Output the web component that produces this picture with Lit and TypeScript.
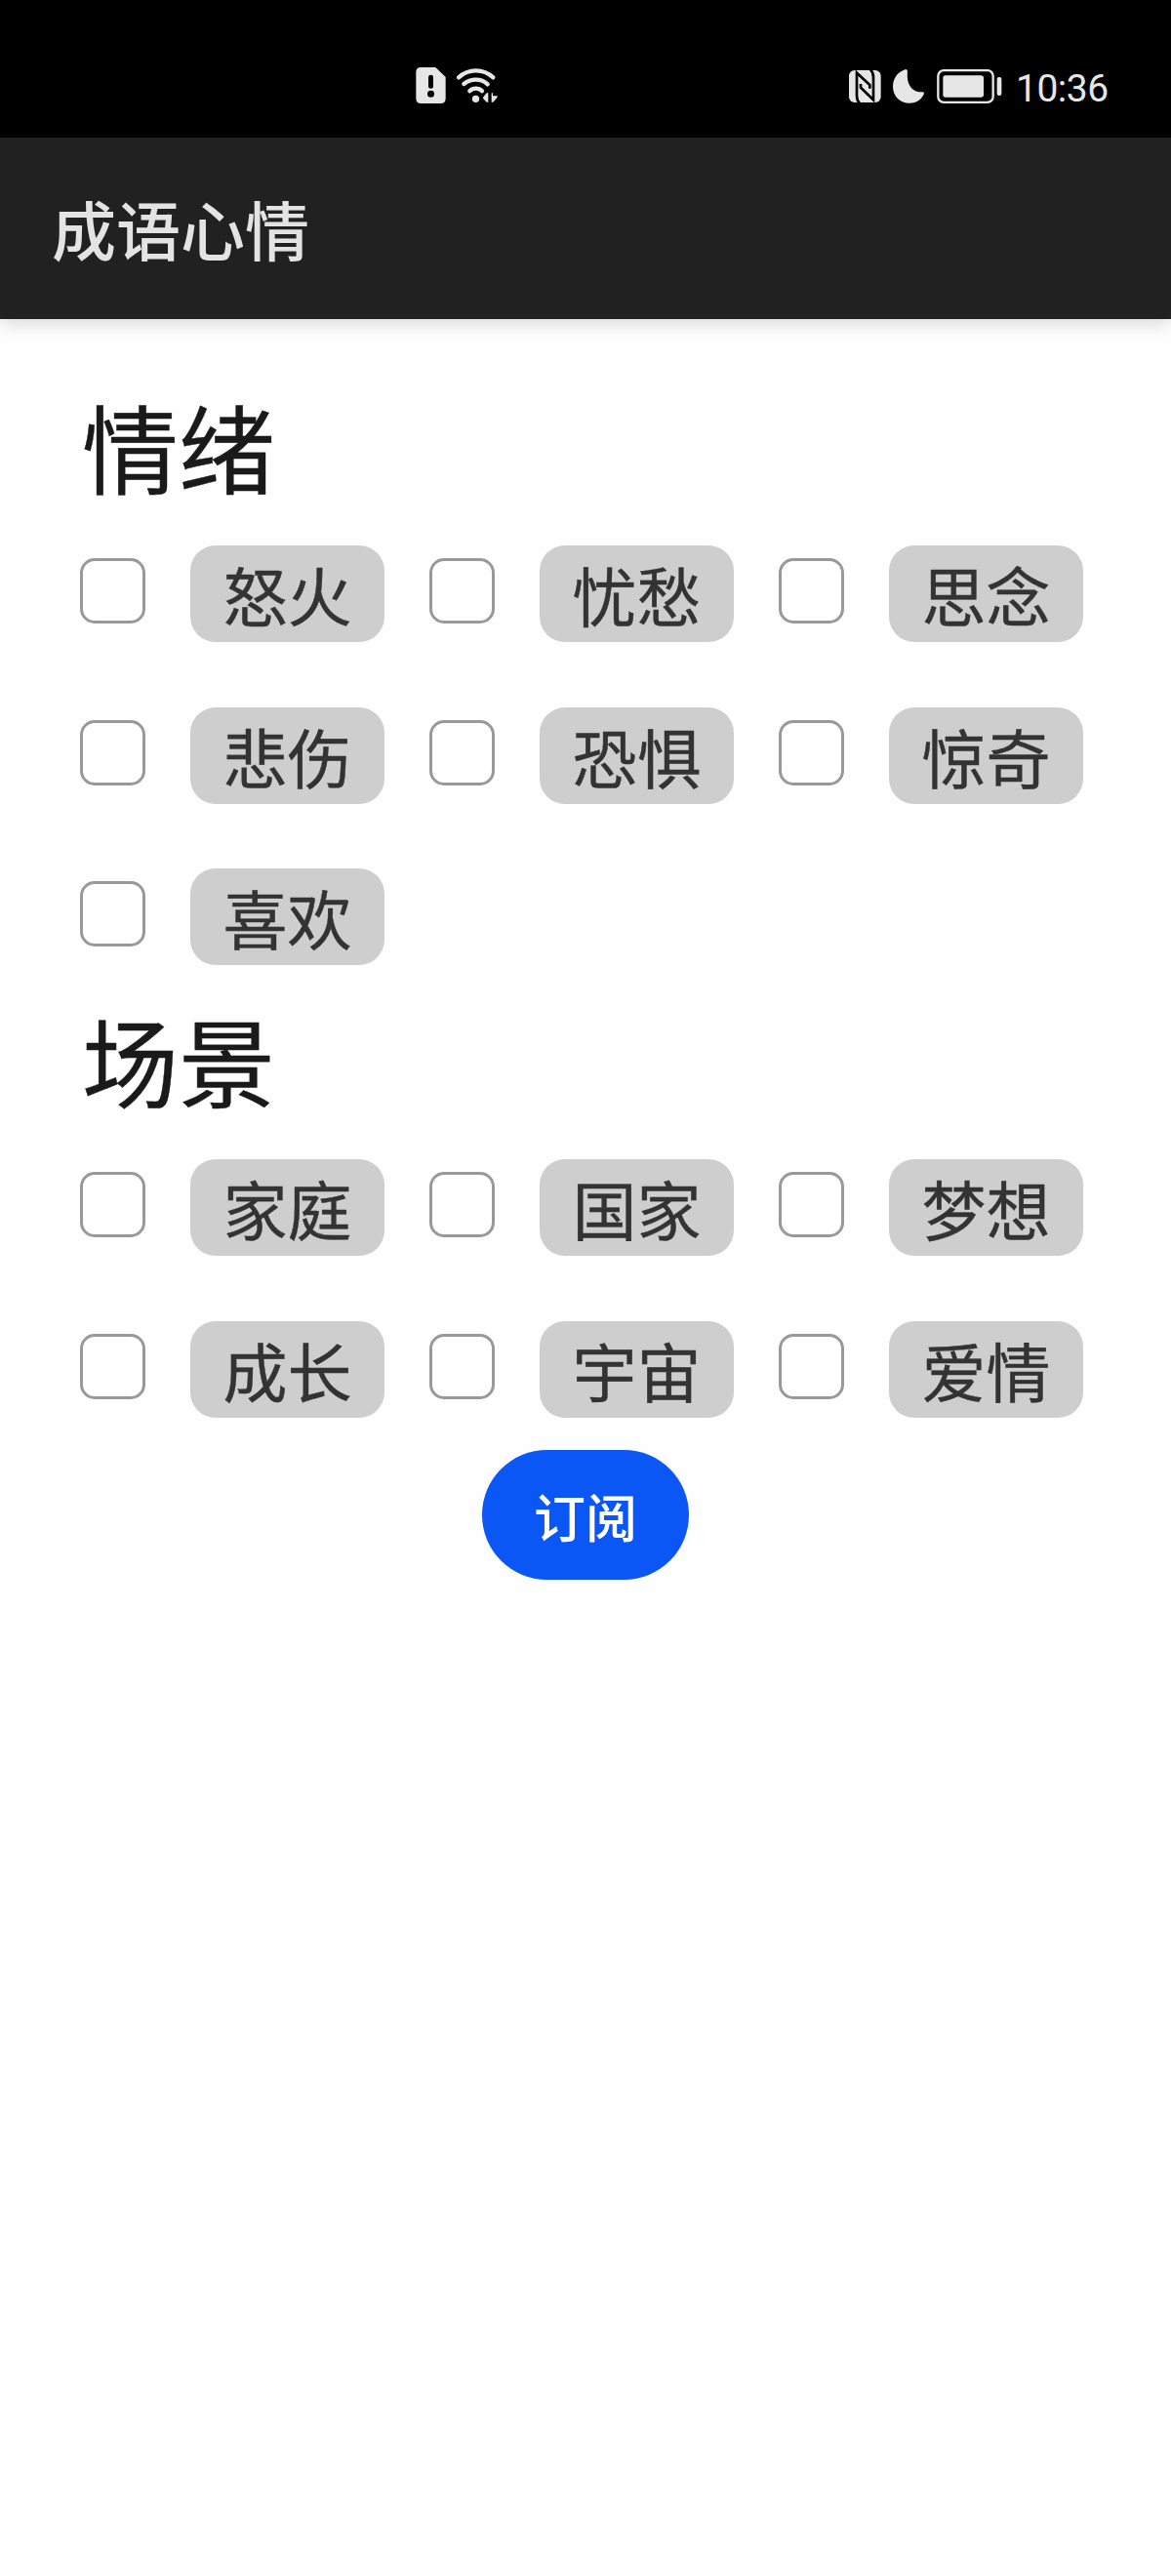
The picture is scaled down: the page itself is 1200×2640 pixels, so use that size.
import { LitElement, html, css } from "lit";
import { customElement, property } from "lit/decorators.js";

const FONT = css`"Noto Sans CJK SC", "Noto Sans", sans-serif`;

@customElement("status-bar")
class StatusBar extends LitElement {
  static styles = css`
    :host {
      display: flex;
      box-sizing: border-box;
      height: 141px;
      padding: 50px 60px 11px 400px;
      background: #000;
      color: #e6e6e6;
    }
    .left { flex: none; width: 130px; height: 80px; }
    .right { flex: none; width: 190px; height: 80px; margin-left: 320px; }
    .time {
      flex: none;
      font: 400 39px/80px Roboto, sans-serif;
      margin: 1px 0 0 1px;
      white-space: nowrap;
      letter-spacing: -0.5px;
    }
  `;

  // Icon coordinates are in thirds of a pixel.
  render() {
    return html`
      <svg class="left" viewBox="0 0 390 240" fill="#e6e6e6">
        <path d="M94 57H139L170 87V153Q170 168 155 168H94Q79 168 79 153V72Q79 57 94 57Z" />
        <path d="M124.500 88V115" stroke="#000" stroke-width="15" stroke-linecap="round" />
        <circle cx="124.500" cy="139" r="10.500" fill="#000" />
        <g fill="none" stroke="#e6e6e6" stroke-width="13" stroke-linecap="round">
          <path d="M210 88Q233 67 263 67T316 88" />
          <path d="M226 108Q242 95 263 95T299 109" />
          <path d="M244 130Q252 122 263 122T282 130" />
        </g>
        <circle cx="262.500" cy="154" r="11" />
        <path d="M301 136V164H296L285 152V149L296 136Z" />
        <path d="M311 136H315V145H329V149L316 164H311Z" />
      </svg>
      <svg class="right" viewBox="0 0 570 240" fill="#e6e6e6">
        <rect x="60" y="66" width="98" height="99" rx="17" />
        <g fill="none" stroke="#000" stroke-width="8">
          <path d="M92 167Q84 158 84 144V74L124 111V122" />
          <path d="M126 64Q135 73 135 87V157L96 119V108" />
        </g>
        <path d="M229 65Q238 60 240 69C236 105 250 134 286 133Q293 134 290 140C281 158 265 167 246 167C217 167 195 145 195 116C195 93 207 73 229 65Z" />
        <rect x="334" y="66.500" width="169" height="98" rx="17" fill="none" stroke="#e6e6e6" stroke-width="7" />
        <rect x="349" y="82" width="125" height="67" rx="8" />
        <rect x="515" y="87" width="14" height="57" rx="6" />
      </svg>
      <span class="time">10:36</span>
    `;
  }
}

@customElement("app-bar")
class AppBar extends LitElement {
  static styles = css`
    :host {
      display: flex;
      align-items: center;
      box-sizing: border-box;
      height: 186px;
      padding: 0 53px 2px;
      background: #212121;
      box-shadow: 0 4px 18px rgba(0, 0, 0, 0.16);
      color: #e3e3e3;
      font: 500 66px/96px ${FONT};
    }
  `;

  render() {
    return html`<slot></slot>`;
  }
}

@customElement("tag-group")
class TagGroup extends LitElement {
  @property() heading = "";
  @property({ attribute: false }) tags: string[] = [];

  static styles = css`
    :host { display: block; }
    .heading {
      margin: 0;
      height: 198px;
      box-sizing: border-box;
      padding: 22px 0 0 2px;
      font: 400 99px/146px ${FONT};
      color: #1a1a1a;
      -webkit-text-stroke: 0.4px #1a1a1a;
    }
    .grid {
      display: grid;
      grid-template-columns: repeat(3, 358px);
      row-gap: 66.500px;
    }
    .item {
      display: flex;
      height: 99px;
    }
    .box {
      appearance: none;
      box-sizing: border-box;
      width: 67px;
      height: 67px;
      margin: 13px 46px 0 0;
      border: 3px solid #999;
      border-radius: 15px;
      background: #fff;
    }
    .chip {
      box-sizing: border-box;
      width: 199px;
      height: 99px;
      border-radius: 26px;
      background: #cecece;
      color: #333;
      text-align: center;
      font: 400 66px/99px ${FONT};
      -webkit-text-stroke: 0.4px #333;
    }
  `;

  render() {
    return html`
      <h2 class="heading">${this.heading}</h2>
      <div class="grid">
        ${this.tags.map(
          (tag) => html`<label class="item">
            <input class="box" type="checkbox" /><span class="chip">${tag}</span>
          </label>`
        )}
      </div>
    `;
  }
}

@customElement("app-root")
class AppRoot extends LitElement {
  static styles = css`
    :host {
      display: block;
      min-height: 2640px;
      background: #fefefe;
    }
    .content {
      display: flex;
      flex-direction: column;
      gap: 1px;
      padding: 34px 44px 0 82px;
    }
    .subscribe {
      align-self: center;
      width: 212px;
      height: 133px;
      margin: 32px 38px 0 0;
      padding: 1px 0 0;
      border: 0;
      border-radius: 67px;
      background: #0b57f5;
      color: #fff;
      font: 500 53px/80px ${FONT};
    }
  `;

  render() {
    return html`
      <status-bar></status-bar>
      <app-bar>成语心情</app-bar>
      <main class="content">
        <tag-group
          heading="情绪"
          .tags=${["怒火", "忧愁", "思念", "悲伤", "恐惧", "惊奇", "喜欢"]}
        ></tag-group>
        <tag-group
          heading="场景"
          .tags=${["家庭", "国家", "梦想", "成长", "宇宙", "爱情"]}
        ></tag-group>
        <button class="subscribe">订阅</button>
      </main>
    `;
  }
}
